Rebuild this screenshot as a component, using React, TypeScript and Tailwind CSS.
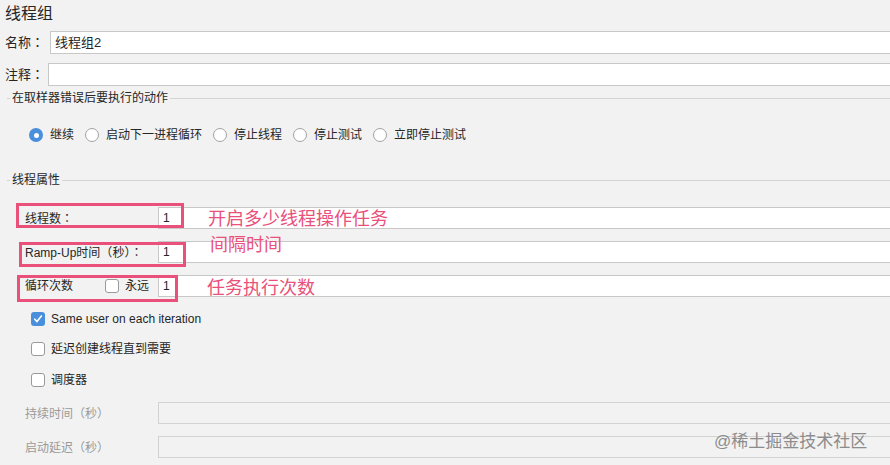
import React from 'react';

const font = { fontFamily: '"Liberation Sans", "Noto Sans CJK SC", sans-serif' };
const jp = { fontFamily: '"Noto Sans CJK JP", sans-serif' };

// centred full-width punctuation like the Mac rendering
const P: React.FC<{ c: string }> = ({ c }) => <span style={jp}>{c}</span>;

const Radio: React.FC<{ checked?: boolean; label: string }> = ({ checked, label }) => (
  <div className="flex items-center">
    {checked ? (
      <span className="flex h-[14px] w-[14px] items-center justify-center rounded-full bg-[#4a8fdb]">
        <span className="h-[5px] w-[5px] rounded-full bg-white" />
      </span>
    ) : (
      <span className="h-[14px] w-[14px] rounded-full border border-[#a3a3a3] bg-white" />
    )}
    <span className="ml-[7px] text-[12px] text-[#262626]">{label}</span>
  </div>
);

const Checkbox: React.FC<{ checked?: boolean }> = ({ checked }) =>
  checked ? (
    <span className="flex h-[14px] w-[14px] items-center justify-center rounded-[3px] bg-[#4a8fdb]">
      <svg width="10" height="10" viewBox="0 0 10 10" fill="none">
        <path d="M1.8 5.2 L4 7.6 L8.4 2" stroke="white" strokeWidth="1.6" strokeLinecap="round" strokeLinejoin="round" />
      </svg>
    </span>
  ) : (
    <span className="h-[14px] w-[14px] rounded-[3px] border border-[#9a9a9a] bg-white" />
  );

const Section: React.FC<{ title: string }> = ({ title }) => (
  <div className="flex h-[24px] items-center pl-[7px]">
    <div className="h-px w-[3px] bg-[#d4d4d4]" />
    <span className="px-[2px] text-[12px] text-[#262626]">{title}</span>
    <div className="h-px flex-1 bg-[#d4d4d4]" />
  </div>
);

const App: React.FC = () => {
  return (
    <div style={font} className="relative h-[465px] w-full overflow-hidden bg-[#f2f2f2] text-[#262626]">
      <div className="h-[28px] pl-[5px] text-[16px] leading-[28px]">线程组</div>

      <div className="mt-[3px] flex h-[23px] items-center">
        <span className="w-[50px] pl-[5px] text-[13px]">
          名称<P c="：" />
        </span>
        <div className="flex h-full flex-1 items-center border border-r-0 border-[#c8c8c8] bg-white pl-[4px] text-[13px]">
          线程组2
        </div>
      </div>

      <div className="mt-[9px] flex h-[23px] items-center">
        <span className="w-[48px] pl-[5px] text-[13px]">
          注释<P c="：" />
        </span>
        <div className="h-full flex-1 border border-r-0 border-[#c8c8c8] bg-white" />
      </div>

      <Section title="在取样器错误后要执行的动作" />

      <div className="mt-[13px] flex h-[24px] items-center gap-[11px] pl-[29px]">
        <Radio checked label="继续" />
        <Radio label="启动下一进程循环" />
        <Radio label="停止线程" />
        <Radio label="停止测试" />
        <Radio label="立即停止测试" />
      </div>

      <div className="mt-[21px]">
        <Section title="线程属性" />
      </div>

      <div className="mt-[15px] flex h-[22px] items-center">
        <span className="w-[158px] pl-[25px] text-[12px]">
          线程数<P c="：" />
        </span>
        <div className="flex h-full flex-1 items-center border border-r-0 border-[#c8c8c8] bg-white pl-[4px] text-[12px]">1</div>
      </div>

      <div className="mt-[12px] flex h-[22px] items-center">
        <span className="w-[158px] pl-[25px] text-[12px]">
          Ramp-Up时间<P c="（" />秒<P c="）" /><P c="：" />
        </span>
        <div className="flex h-full flex-1 items-center border border-r-0 border-[#c8c8c8] bg-white pl-[4px] text-[12px]">1</div>
      </div>

      <div className="mt-[12px] flex h-[22px] items-center">
        <div className="flex w-[158px] items-center pl-[25px] text-[12px]">
          <span className="w-[80px]">循环次数</span>
          <Checkbox />
          <span className="ml-[6px]">永远</span>
        </div>
        <div className="flex h-full flex-1 items-center border border-r-0 border-[#c8c8c8] bg-white pl-[4px] text-[12px]">1</div>
      </div>

      <div className="mt-[12px] flex h-[20px] items-center pl-[31px]">
        <Checkbox checked />
        <span className="ml-[6px] text-[12px]">Same user on each iteration</span>
      </div>
      <div className="mt-[10px] flex h-[20px] items-center pl-[31px]">
        <Checkbox />
        <span className="ml-[6px] text-[12px]">延迟创建线程直到需要</span>
      </div>
      <div className="mt-[11px] flex h-[20px] items-center pl-[31px]">
        <Checkbox />
        <span className="ml-[6px] text-[12px]">调度器</span>
      </div>

      <div className="mt-[12px] flex h-[22px] items-center">
        <span className="w-[158px] pl-[25px] text-[12px] text-[#9a9a9a]">
          持续时间<P c="（" />秒<P c="）" />
        </span>
        <div className="h-full flex-1 border border-r-0 border-[#d2d2d2] bg-[#f2f2f2]" />
      </div>
      <div className="mt-[12px] flex h-[22px] items-center">
        <span className="w-[158px] pl-[25px] text-[12px] text-[#9a9a9a]">
          启动延迟<P c="（" />秒<P c="）" />
        </span>
        <div className="h-full flex-1 border border-r-0 border-[#d2d2d2] bg-[#f2f2f2]" />
      </div>

      {/* annotations */}
      <div className="absolute left-[16px] top-[203px] h-[25px] w-[168px] border-[3px] border-[#e9507a]" />
      <div className="absolute left-[19px] top-[242px] h-[25px] w-[167px] border-[3px] border-[#e9507a]" />
      <div className="absolute left-[17px] top-[275px] h-[27px] w-[161px] border-[3px] border-[#e9507a]" />
      <div className="absolute left-[208px] top-[207px] text-[18px] leading-[24px] text-[#e9507a]">开启多少线程操作任务</div>
      <div className="absolute left-[210px] top-[233px] text-[18px] leading-[24px] text-[#e9507a]">间隔时间</div>
      <div className="absolute left-[207px] top-[276px] text-[18px] leading-[24px] text-[#e9507a]">任务执行次数</div>

      <div className="absolute left-[714px] top-[430px] text-[17px] leading-[24px] text-[#8c8c8c]">@稀土掘金技术社区</div>
    </div>
  );
};

export default App;
